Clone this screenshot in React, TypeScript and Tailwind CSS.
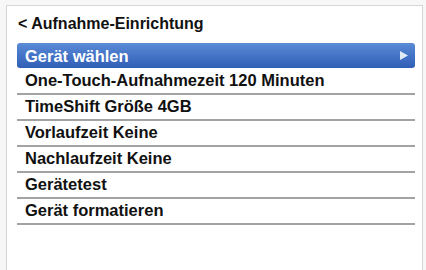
import React from 'react';

const rows = [
  'One-Touch-Aufnahmezeit 120 Minuten',
  'TimeShift Größe 4GB',
  'Vorlaufzeit Keine',
  'Nachlaufzeit Keine',
  'Gerätetest',
  'Gerät formatieren',
];

export default function App() {
  return (
    <div className="w-[426px] h-[270px] overflow-hidden bg-[#f7f7f7] pt-[5px] pl-[6px] pr-[3px]" style={{ fontFamily: '"Liberation Sans", Arial, sans-serif' }}>
      <div className="h-[270px] border border-[#d6d6d6] bg-white pl-[10px] pr-[7px]">
        {/* Title */}
        <div className="h-[37px] pt-[9px] pl-[1px] text-[16px] leading-[18px] font-bold text-[#111]">
          &lt; Aufnahme-Einrichtung
        </div>

        {/* Selected item */}
        <div className="h-[25px] flex items-center justify-between rounded-[3px] bg-gradient-to-b from-[#5b8ad6] to-[#2f5eb6] pl-[8px] pr-[7px]">
          <span className="text-[16.5px] leading-[18px] font-bold text-white">Gerät wählen</span>
          <svg width="8" height="9" viewBox="0 0 8 9">
            <path d="M0 0 L8 4.5 L0 9 Z" fill="#e3ebf7" />
          </svg>
        </div>

        {/* Menu rows */}
        {rows.map((label, i) => (
          <div
            key={label}
            className={`${i === 0 ? 'h-[27px] pt-[3px]' : 'h-[26px] pt-[2px]'} border-b-2 border-[#a3a3a3] pl-[8px] text-[16.5px] leading-[18px] font-bold text-[#111]`}
          >
            {label}
          </div>
        ))}
      </div>
    </div>
  );
}
